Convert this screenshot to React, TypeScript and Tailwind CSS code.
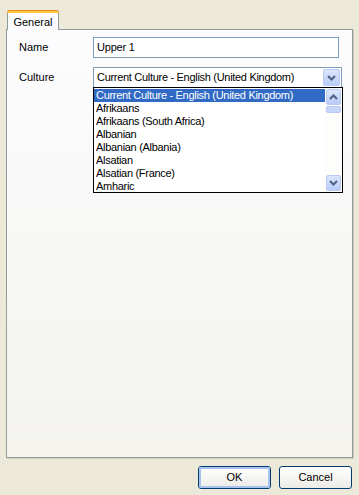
import React from 'react';

const cultures = [
    'Current Culture - English (United Kingdom)',
    'Afrikaans',
    'Afrikaans (South Africa)',
    'Albanian',
    'Albanian (Albania)',
    'Alsatian',
    'Alsatian (France)',
    'Amharic',
];

const Chevron = ({ up = false }: { up?: boolean }) => (
    <svg width="9" height="6" viewBox="0 0 9 6" className={up ? 'rotate-180' : ''}>
        <path d="M1 1 L4.5 4.5 L8 1" fill="none" stroke="#4D6185" strokeWidth="2" />
    </svg>
);

const ScrollButton = ({ up = false, className = '' }: { up?: boolean; className?: string }) => (
    <div className={`flex items-center justify-center rounded-[2px] border border-[#BBCAF5] bg-gradient-to-b from-[#DCE6FD] to-[#B9CCF8] ${className}`}>
        <Chevron up={up} />
    </div>
);

const XpButton = ({ label, isDefault = false }: { label: string; isDefault?: boolean }) => (
    <button className="w-[73px] h-[23px] rounded-[3px] border border-[#003C74] bg-gradient-to-b from-[#FFFFFF] to-[#ECEBE6] text-[11px] text-black">
        <div className={`h-full w-full flex items-center justify-center rounded-[2px] ${isDefault ? 'border-2 border-[#A8C4EE]' : ''}`}>
            {label}
        </div>
    </button>
);

export default function App() {
    return (
        <div
            className="w-[359px] h-[495px] bg-[#ECE9D8] flex flex-col pt-[10px] pl-[6px] pr-[6px] pb-[6px] text-[11px] text-black"
            style={{ fontFamily: '"Liberation Sans", Arial, sans-serif' }}
        >
            {/* tab header */}
            <div className="flex pl-[1px]">
                <div className="relative z-10 -mb-[1px] w-[52px] h-[20px] rounded-t-[3px] border-x border-[#919B9C] bg-[#FCFCFE] flex items-start justify-center">
                    <div className="absolute left-[-1px] right-[-1px] top-0 h-[3px] rounded-t-[3px] bg-[#FFC83C] border-t border-[#E68B2C]" />
                    <span className="mt-[4px]">General</span>
                </div>
            </div>

            {/* tab panel */}
            <div className="flex-1 border border-[#919B9C] bg-gradient-to-b from-[#FCFCFE] to-[#F4F3EE] shadow-[1px_1px_0_#D0CEBF] pt-[7px] pl-[12px] flex flex-col gap-[9px]">
                <div className="flex items-center">
                    <div className="w-[74px]">Name</div>
                    <div className="w-[246px] h-[21px] border border-[#7F9DB9] bg-white flex items-center pl-[3px] text-[11px] tracking-[-0.2px]">
                        Upper 1
                    </div>
                </div>
                <div className="flex items-center relative">
                    <div className="w-[74px]">Culture</div>
                    <div className="w-[249px] h-[21px] border border-[#7F9DB9] bg-white flex items-center pl-[3px] pr-[1px] text-[11px] tracking-[-0.3px]">
                        <span className="flex-1 whitespace-nowrap">Current Culture - English (United Kingdom)</span>
                        <ScrollButton className="w-[17px] h-[17px]" />
                    </div>

                    {/* dropdown list */}
                    <div className="absolute left-[74px] top-[20px] w-[250px] h-[106px] border border-black bg-white flex text-[11px] leading-[13px] tracking-[-0.3px]">
                        <div className="flex-1 flex flex-col pt-[1px]">
                            {cultures.map((c, i) => (
                                <div
                                    key={c}
                                    className={`h-[13px] pl-[2px] whitespace-nowrap ${i === 0 ? 'bg-[#316AC5] text-white' : ''}`}
                                >
                                    {c}
                                </div>
                            ))}
                        </div>
                        <div className="w-[17px] bg-[#FDFDFB] flex flex-col p-[1px]">
                            <ScrollButton up className="h-[16px]" />
                            <div className="h-[7px] mt-[1px] rounded-[2px] border border-[#BBCAF5] bg-[#C8D6FA]" />
                            <div className="flex-1" />
                            <ScrollButton className="h-[16px]" />
                        </div>
                    </div>
                </div>
            </div>

            {/* buttons */}
            <div className="flex justify-end gap-[8px] mt-[8px] pr-[1px]">
                <XpButton label="OK" isDefault />
                <XpButton label="Cancel" />
            </div>
        </div>
    );
}
